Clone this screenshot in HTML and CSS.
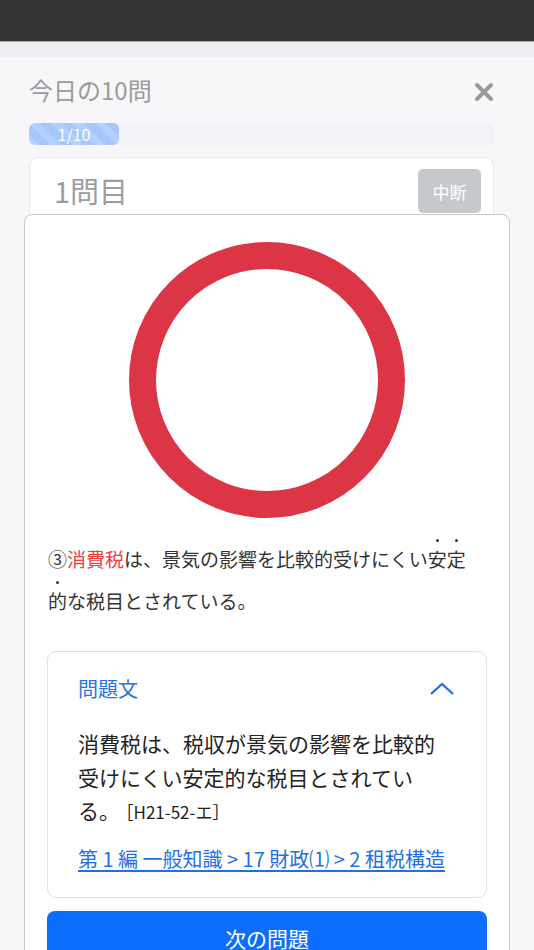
FILE: index.html
```html
<!DOCTYPE html>
<html lang="ja">
<head>
<meta charset="utf-8">
<title>今日の10問</title>
<link rel="stylesheet" href="styles.css">
</head>
<body>
<div class="statusbar"></div>
<div class="band"></div>
<main class="screen">
  <div class="header">
    <h1 class="title">今日の10問</h1>
    <svg class="close" width="20" height="20" viewBox="0 0 20 20" aria-label="閉じる">
      <path d="M3 3 L17 17 M17 3 L3 17" stroke="#9a9a9a" stroke-width="4" stroke-linecap="round" fill="none"/>
    </svg>
  </div>
  <div class="progress">
    <div class="progress-bar" style="width:90px">1/10</div>
  </div>
  <div class="qcard">
    <span class="qnum">1問目</span>
    <button class="pause">中断</button>
  </div>
</main>

<section class="sheet">
  <div class="mark">
    <svg width="276" height="276" viewBox="0 0 276 276">
      <circle cx="138" cy="138" r="124.5" fill="none" stroke="#dc3545" stroke-width="27"/>
    </svg>
  </div>
  <p class="answer">③<span class="red">消費税</span>は、景気の影響を比較的受けにくい<span class="dot">安</span><span class="dot">定</span><span class="dot">的</span>な税目とされている。</p>

  <div class="panel">
    <div class="panel-head">
      <span class="panel-title">問題文</span>
      <svg class="chev" width="26" height="14" viewBox="0 0 26 14">
        <path d="M2 12 L13 2 L24 12" stroke="#1f6fe5" stroke-width="2.2" fill="none"/>
      </svg>
    </div>
    <p class="question">消費税は、税収が景気の影響を比較的受けにくい安定的な税目とされている。<span class="ref">［H21-52-エ］</span></p>
    <a class="crumb" href="#">第 1 編 一般知識 &gt; 17 財政⑴ &gt; 2 租税構造</a>
  </div>

  <button class="next">次の問題</button>
</section>
</body>
</html>
```
FILE: styles.css
```css
html, body {
  height: 950px;
  overflow: hidden;
}
body {
  margin: 0;
  background: #f7f7f9;
  font-family: "Noto Sans CJK JP", "Noto Sans", sans-serif;
  position: relative;
}
.statusbar {
  height: 41px;
  background: #333333;
  border-bottom: 1px solid #a9a9ad;
}
.band {
  height: 15px;
  background: #efeff3;
}
.screen {
  padding: 13px 40px 0 29px;
}
.header {
  height: 44px;
  display: flex;
  align-items: center;
  justify-content: space-between;
}
.title {
  margin: 0 0 4px 0;
  font-size: 24px;
  font-weight: normal;
  color: #9b9b9b;
  line-height: 40px;
}
.close {
  display: block;
}
.progress {
  margin-top: 9px;
  height: 22px;
  background: #f1f2f5;
  border-radius: 6px;
  overflow: hidden;
}
.progress-bar {
  height: 22px;
  border-radius: 6px;
  background-color: #a5c7fe;
  background-image: linear-gradient(45deg, rgba(255,255,255,.16) 25%, transparent 25%, transparent 50%, rgba(255,255,255,.16) 50%, rgba(255,255,255,.16) 75%, transparent 75%, transparent);
  background-size: 22px 22px;
  color: #ffffff;
  font-size: 16px;
  line-height: 22px;
  text-align: center;
}
.qcard {
  margin-top: 12px;
  height: 90px;
  background: #ffffff;
  border: 1px solid #e9e9ec;
  border-radius: 9px;
  display: flex;
  justify-content: space-between;
  align-items: flex-start;
  padding: 11px 12px 0 24px;
  box-sizing: border-box;
}
.qnum {
  font-size: 29px;
  color: #9d9d9d;
  line-height: 42px;
}
.pause {
  width: 63px;
  height: 44px;
  border: none;
  border-radius: 5px;
  background: #c6c9cc;
  color: #ffffff;
  font-family: inherit;
  font-size: 17px;
  padding: 0;
}
.sheet {
  position: absolute;
  top: 214px;
  left: 24px;
  width: 486px;
  height: 760px;
  box-sizing: border-box;
  background: #ffffff;
  border: 1px solid #c9c9cc;
  border-radius: 8px;
  padding: 27px 22px 0 22px;
}
.mark {
  display: flex;
  justify-content: center;
}
.mark svg {
  display: block;
}
.answer {
  margin: 20px 4px 0 1px;
  font-size: 19px;
  line-height: 42px;
  color: #333333;
}
.red {
  color: #f23c3c;
}
.dot {
  position: relative;
}
.dot::before {
  content: "";
  position: absolute;
  left: 50%;
  top: -6px;
  width: 3px;
  height: 3px;
  margin-left: -1.5px;
  border-radius: 50%;
  background: #333333;
}
.panel {
  margin-top: 29px;
  border: 1px solid #dfe2e7;
  border-radius: 9px;
  padding: 22px 34px 24px 30px;
}
.panel-head {
  height: 30px;
  display: flex;
  align-items: center;
  justify-content: space-between;
  margin-right: -4px;
}
.panel-title {
  font-size: 20px;
  color: #2376e4;
  line-height: 30px;
}
.chev {
  display: block;
  margin-right: 1px;
}
.question {
  margin: 23px 0 0 0;
  font-size: 21px;
  line-height: 33.5px;
  color: #222222;
}
.ref {
  font-size: 17px;
  margin-left: 5px;
}
.crumb {
  display: block;
  margin-top: 16px;
  margin-right: -8px;
  font-size: 20px;
  line-height: 28px;
  color: #1f6fe5;
  text-decoration: underline;
  text-underline-offset: 3px;
  white-space: nowrap;
}
.next {
  display: block;
  width: 100%;
  margin-top: 13px;
  height: 56px;
  border: none;
  border-radius: 8px;
  background: #0d6efd;
  color: #ffffff;
  font-family: inherit;
  font-size: 21px;
  padding: 0 0 2px 0;
}
```
